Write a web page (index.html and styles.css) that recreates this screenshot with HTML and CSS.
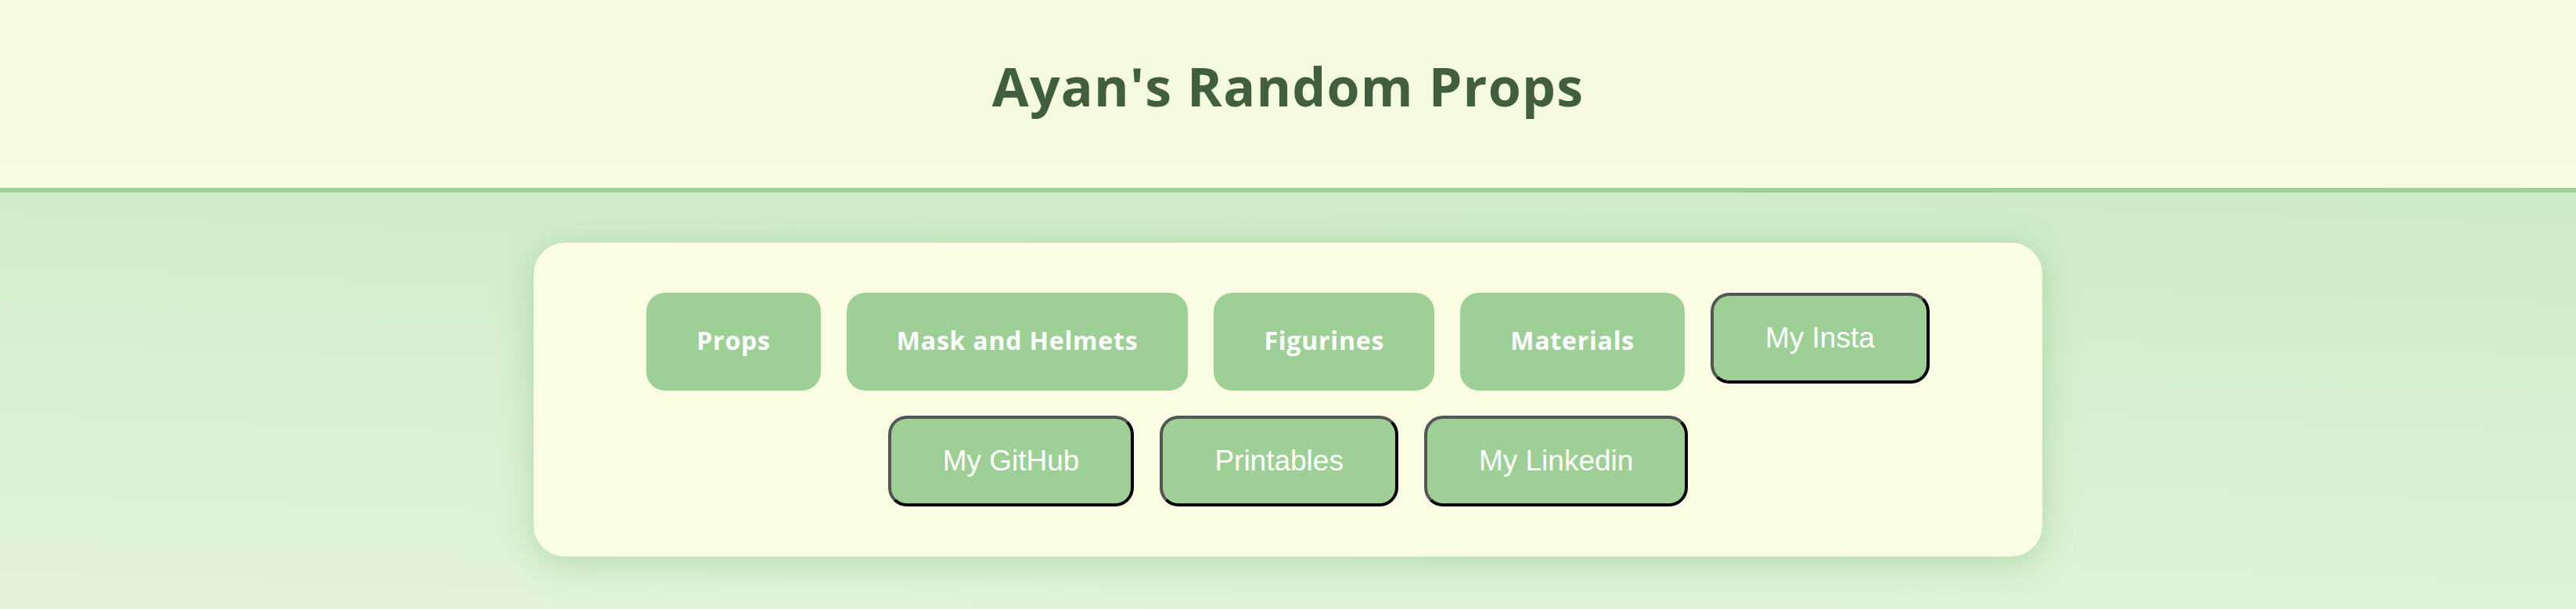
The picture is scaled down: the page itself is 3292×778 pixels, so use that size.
FILE: index.html
```html
<!DOCTYPE html>
<html lang="en">
<head>
<meta charset="utf-8">
<title>Ayan's Random Props</title>
<link rel="stylesheet" href="styles.css">
</head>
<body>
  <header class="site-header">
    <h1 class="site-title">Ayan's Random Props</h1>
  </header>
  <main class="page">
    <section class="card">
      <nav class="links">
        <a class="pill" href="#">Props</a>
        <a class="pill" href="#">Mask and Helmets</a>
        <a class="pill" href="#">Figurines</a>
        <a class="pill" href="#">Materials</a>
        <button class="btn" type="button">My Insta</button>
        <button class="btn" type="button">My GitHub</button>
        <button class="btn" type="button">Printables</button>
        <button class="btn" type="button">My Linkedin</button>
      </nav>
    </section>
  </main>
</body>
</html>
```

FILE: styles.css
```css
html, body {
  margin: 0;
  padding: 0;
}

body {
  font-family: "Open Sans", "Noto Sans", sans-serif;
  background: #e0f3d8;
  min-height: 778px;
}

.site-header {
  box-sizing: border-box;
  height: 246px;
  padding-top: 64px;
  background: linear-gradient(180deg, #f4fadd 0%, #f6fbe1 100%);
  border-bottom: 6px solid #9ecf97;
  text-align: center;
}

.site-title {
  margin: 0;
  font-family: "Open Sans", "Noto Sans", sans-serif;
  font-weight: 700;
  font-size: 68px;
  line-height: 92px;
  letter-spacing: 1.2px;
  color: #415f3e;
}

.page {
  box-sizing: border-box;
  min-height: 532px;
  padding: 64px 0;
  background: linear-gradient(182deg, #cdeac7 0%, #d7efd0 45%, #e2f4d9 100%);
}

.card {
  box-sizing: border-box;
  width: 1928px;
  margin: 0 auto;
  padding: 64px;
  background: #fafde3;
  border-radius: 40px;
  box-shadow: 0 8px 44px rgba(110, 175, 100, 0.38);
}

.links {
  display: flex;
  flex-wrap: wrap;
  justify-content: center;
  align-items: flex-start;
  gap: 32px 33px;
}

.pill {
  display: inline-block;
  padding: 30px 64px 34px;
  background: #9ecf97;
  border-radius: 24px;
  color: #ffffff;
  font-family: "Open Sans", "Noto Sans", sans-serif;
  font-weight: 700;
  font-size: 32px;
  line-height: 61px;
  letter-spacing: 0.8px;
  text-decoration: none;
}

.btn {
  display: inline-block;
  margin: 0;
  padding: 33px 66px;
  background: #9ecf97;
  border-width: 4px;
  border-style: solid;
  border-color: #555555 #000000 #000000 #555555;
  border-radius: 24px;
  color: #ffffff;
  font-family: "Liberation Sans", Arial, sans-serif;
  font-weight: 400;
  font-size: 37px;
  line-height: 42px;
  cursor: pointer;
}
```
